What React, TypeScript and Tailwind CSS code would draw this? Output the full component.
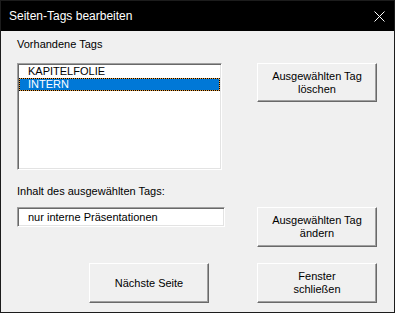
import React from 'react';

const raised =
  'border border-t-white border-l-white border-r-[#696969] border-b-[#696969] shadow-[inset_-1px_-1px_0_#a0a0a0] bg-[#f0f0f0]';
const sunken =
  'border border-t-[#a0a0a0] border-l-[#a0a0a0] border-r-white border-b-white shadow-[inset_1px_1px_0_#696969,inset_-1px_-1px_0_#e3e3e3] bg-white';

const Btn: React.FC<{ lines: string[]; className?: string }> = ({ lines, className = '' }) => (
  <div className={`${raised} w-[120px] flex flex-col items-center justify-center leading-[13px] text-[11px] text-black ${className}`}>
    {lines.map((l) => (
      <span key={l}>{l}</span>
    ))}
  </div>
);

export default function App() {
  return (
    <div className="w-[395px] h-[313px] bg-[#f0f0f0] border border-[#1c1c1c] flex flex-col font-['Liberation_Sans',Arial,sans-serif] text-[11px] text-black overflow-hidden">
      {/* title bar */}
      <div className="h-[30px] shrink-0 bg-black flex items-center justify-between pl-2 pr-[9px]">
        <span className="text-white text-[12px] leading-none">Seiten-Tags bearbeiten</span>
        <svg width="11" height="11" viewBox="0 0 11 11" className="block">
          <path d="M0.5 0.5 L10.5 10.5 M10.5 0.5 L0.5 10.5" stroke="white" strokeWidth="1" />
        </svg>
      </div>

      <div className="flex flex-col px-4">
        <div className="mt-[7px] h-[13px] leading-[13px]">Vorhandene Tags</div>

        <div className="mt-[12px] flex items-start">
          <div className={`${sunken} w-[205px] h-[107px] p-[1px] leading-[13px]`}>
            <div className="h-[13px] pl-[9px]">KAPITELFOLIE</div>
            <div className="h-[13px] bg-[#e8a040] border border-dotted border-black">
              <div className="h-full bg-[#0078d7] text-white pl-[8px] leading-[11px]">INTERN</div>
            </div>
          </div>
          <Btn lines={['Ausgewählten Tag', 'löschen']} className="ml-[35px] h-[39px]" />
        </div>

        <div className="mt-[15px] h-[13px] leading-[13px]">Inhalt des ausgewählten Tags:</div>

        <div className="mt-[9px] flex items-start">
          <div className={`${sunken} w-[208px] h-[20px] pl-[10px] flex items-center`}>
            nur interne Präsentationen
          </div>
          <Btn lines={['Ausgewählten Tag', 'ändern']} className="ml-[32px] h-[40px]" />
        </div>

        <div className="mt-[16px] flex items-start">
          <Btn lines={['Nächste Seite']} className="ml-[72px] h-[40px]" />
          <Btn lines={['Fenster', 'schließen']} className="ml-[48px] h-[40px]" />
        </div>
      </div>
    </div>
  );
}
